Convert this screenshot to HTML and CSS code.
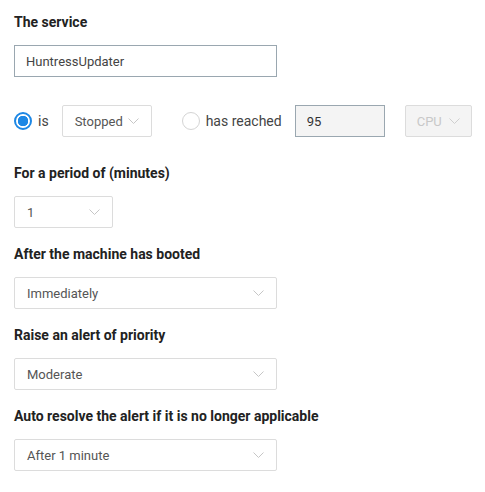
FILE: index.html
```html
<!DOCTYPE html>
<html>
    <head>
        <title>Service alert</title>
        <link rel="stylesheet" href="styles.css">
    </head>
    <body>
        <form class="rule-form">
            <div class="field">
                <label class="field-label" for="service">The service</label>
                <input id="service" class="text-input wide" type="text" value="HuntressUpdater">
            </div>

            <div class="condition-row">
                <label class="radio-opt">
                    <input type="radio" name="cond" checked>
                    <span>is</span>
                </label>
                <div class="select status-select">
                    <span>Stopped</span>
                    <svg class="chev" width="11" height="6" viewBox="0 0 11 6"><path d="M0.5 0.5 L5.5 5.5 L10.5 0.5" fill="none" stroke="currentColor"/></svg>
                </div>

                <label class="radio-opt second">
                    <input type="radio" name="cond">
                    <span>has reached</span>
                </label>
                <input class="text-input threshold" type="text" value="95">
                <div class="select metric-select disabled">
                    <span>CPU</span>
                    <svg class="chev" width="11" height="6" viewBox="0 0 11 6"><path d="M0.5 0.5 L5.5 5.5 L10.5 0.5" fill="none" stroke="currentColor"/></svg>
                </div>
            </div>

            <div class="field">
                <div class="field-label">For a period of (minutes)</div>
                <div class="select small">
                    <span>1</span>
                    <svg class="chev" width="11" height="6" viewBox="0 0 11 6"><path d="M0.5 0.5 L5.5 5.5 L10.5 0.5" fill="none" stroke="currentColor"/></svg>
                </div>
            </div>

            <div class="field">
                <div class="field-label">After the machine has booted</div>
                <div class="select wide">
                    <span>Immediately</span>
                    <svg class="chev" width="11" height="6" viewBox="0 0 11 6"><path d="M0.5 0.5 L5.5 5.5 L10.5 0.5" fill="none" stroke="currentColor"/></svg>
                </div>
            </div>

            <div class="field">
                <div class="field-label">Raise an alert of priority</div>
                <div class="select wide">
                    <span>Moderate</span>
                    <svg class="chev" width="11" height="6" viewBox="0 0 11 6"><path d="M0.5 0.5 L5.5 5.5 L10.5 0.5" fill="none" stroke="currentColor"/></svg>
                </div>
            </div>

            <div class="field">
                <div class="field-label">Auto resolve the alert if it is no longer applicable</div>
                <div class="select wide">
                    <span>After 1 minute</span>
                    <svg class="chev" width="11" height="6" viewBox="0 0 11 6"><path d="M0.5 0.5 L5.5 5.5 L10.5 0.5" fill="none" stroke="currentColor"/></svg>
                </div>
            </div>
        </form>
    </body>
</html>
```

FILE: styles.css
```css
* {box-sizing: border-box}

body {
  margin: 0;
  padding: 12px 14px;
  font-family: Roboto, "Liberation Sans", sans-serif;
  background: #fff;
  color: #222;
}

.field {
  margin-bottom: 16px;
}

.field-label {
  display: block;
  font-size: 14px;
  line-height: 20px;
  font-weight: bold;
  color: #222;
  margin-bottom: 13px;
}

/* inputs */
.text-input {
  flex-shrink: 0;
  height: 32px;
  padding: 0 11px;
  border: 1px solid #9aa7b0;
  font-family: inherit;
  font-size: 13px;
  color: #444;
  outline: none;
}

.wide {
  width: 263px;
}

.threshold {
  width: 90px;
  background: #f4f4f4;
  color: #333;
  margin-left: 13px;
}

/* fake selects */
.select {
  flex-shrink: 0;
  height: 32px;
  display: flex;
  align-items: center;
  justify-content: space-between;
  padding: 0 12px;
  border: 1px solid #dcdcdc;
  border-radius: 2px;
  font-size: 13px;
  color: #555;
}

.select .chev {
  color: #c6c6c6;
}

.small {
  width: 99px;
}

.status-select {
  width: 90px;
  margin-left: 13px;
}

.metric-select {
  width: 67px;
  margin-left: 20px;
  padding: 0 11px;
}

.disabled {
  background: #f4f4f4;
  color: #c8c8c8;
}

.disabled .chev {
  color: #cfcfcf;
}

/* radio row */
.condition-row {
  display: flex;
  align-items: center;
  margin: 28px 0 26px 0;
  height: 32px;
}

.radio-opt {
  flex-shrink: 0;
  display: flex;
  align-items: center;
  white-space: nowrap;
  font-size: 14px;
  color: #444;
}

.radio-opt.second {
  margin-left: 30px;
}

.radio-opt span {
  margin-left: 6px;
}

.radio-opt input {
  appearance: none;
  margin: 0;
  width: 18px;
  height: 18px;
  border: 1px solid #d4d4d4;
  border-radius: 50%;
  background: #fff;
}

.radio-opt input:checked {
  border: 2px solid #1e88e5;
  background: radial-gradient(circle, #1e88e5 0 5px, #fff 5.5px);
}
```
